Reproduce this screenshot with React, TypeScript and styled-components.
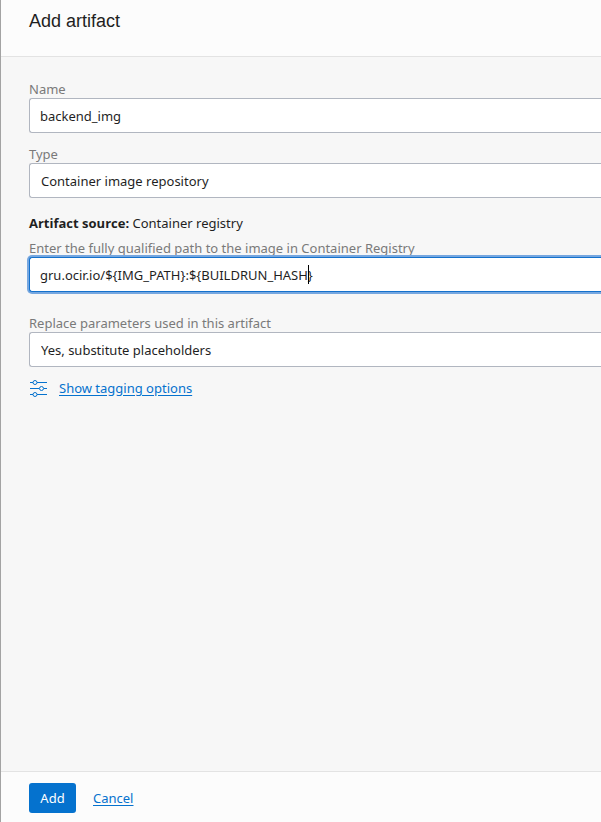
import { useId, useLayoutEffect, useRef, useState } from "react";
import styled, { createGlobalStyle, css } from "styled-components";

const GlobalStyle = createGlobalStyle`
  * { box-sizing: border-box; }
  body { margin: 0; background: #f7f7f7; }
`;

const uiFont = `"Noto Sans", "Open Sans", sans-serif`;

const Drawer = styled.form`
  display: flex;
  flex-direction: column;
  min-height: 100vh;
  border-left: 1px solid #a3a3a3;
  background: #f7f7f7;
  color: #1f1f1f;
  font: 13px/18px ${uiFont};
  overflow: hidden;
`;

const Header = styled.header`
  padding: 9px 28px 23px;
  border-bottom: 1px solid #e3e3e3;
  background: #fcfcfc;
`;

const Title = styled.h1`
  margin: 0;
  font: 400 18px/24px "Liberation Sans", Arial, sans-serif;
`;

const Body = styled.main`
  flex: 1;
  padding: 23px 0 23px 28px;
`;

const Field = styled.div<{ $gap?: number }>`
  display: flex;
  flex-direction: column;
  margin-bottom: ${({ $gap = 12 }) => $gap}px;
`;

const Label = styled.label`
  height: 18px;
  color: #7a7a7a;
  white-space: nowrap;
`;

const control = css`
  display: block;
  width: 100%;
  height: 35px;
  margin: 0;
  border: 1px solid #b1b6c0;
  border-right: 0;
  border-radius: 3px 0 0 3px;
  background: #fff;
  color: #1f1f1f;
  font: 13px/18px ${uiFont};
  outline: none;
`;

const TextInput = styled.input<{ $active?: boolean }>`
  ${control}
  padding: 0 10px;
  ${({ $active }) =>
    $active &&
    css`
      border-color: #1471cc;
      box-shadow: 0 0 0 2px #76a7e0;
      caret-color: transparent;
    `}
`;

const Select = styled.select`
  ${control}
  appearance: none;
  padding: 0 11px;
`;

const Source = styled.p`
  margin: 16px 0 7px;
  line-height: 18px;
`;

const SourceName = styled.strong`
  font-family: "Open Sans", "Noto Sans", sans-serif;
`;

const CaretBox = styled.div`
  position: relative;
`;

const Caret = styled.span`
  position: absolute;
  top: 8px;
  width: 1px;
  height: 19px;
  background: #000;
  pointer-events: none;
`;

const OptionsRow = styled.div`
  display: flex;
  align-items: center;
  gap: 12px;
`;

const Link = styled.a`
  color: #0572ce;
  text-decoration: underline;
  text-underline-offset: 2px;
`;

const Footer = styled.footer`
  display: flex;
  align-items: center;
  gap: 17px;
  padding: 11px 28px 9px;
  border-top: 1px solid #e3e3e3;
  background: #fcfcfc;
`;

const PrimaryButton = styled.button`
  min-width: 47px;
  height: 30px;
  padding: 0 11px;
  border: 0;
  border-radius: 3px;
  background: #0572ce;
  color: #fff;
  font: 13px/18px ${uiFont};
`;

function SlidersIcon() {
  return (
    <svg width="18" height="18" viewBox="0 0 18 18" fill="none" stroke="#0572ce" aria-hidden="true">
      <path d="M1 3.5h3M8 3.5h10M1 9.5h9M15 9.5h3M1 15.5h3M8 15.5h10" />
      <circle cx="6" cy="3.5" r="2" />
      <circle cx="12.5" cy="9.5" r="2" />
      <circle cx="6" cy="15.5" r="2" />
    </svg>
  );
}

function PathInput({ id }: { id: string }) {
  const [value, setValue] = useState("gru.ocir.io/${IMG_PATH}:${BUILDRUN_HASH}");
  const [caret, setCaret] = useState(value.length - 1);
  const [left, setLeft] = useState(0);
  const input = useRef<HTMLInputElement>(null);

  useLayoutEffect(() => {
    const context = document.createElement("canvas").getContext("2d");
    if (!context || !input.current) return;
    context.font = getComputedStyle(input.current).font;
    setLeft(11 + Math.round(context.measureText(value.slice(0, caret)).width));
  }, [value, caret]);

  return (
    <CaretBox>
      <TextInput
        id={id}
        ref={input}
        $active
        spellCheck={false}
        value={value}
        onChange={(event) => setValue(event.target.value)}
        onSelect={(event) => setCaret(event.currentTarget.selectionStart ?? 0)}
      />
      <Caret style={{ left }} />
    </CaretBox>
  );
}

export default function App() {
  const id = useId();
  return (
    <>
      <GlobalStyle />
      <Drawer onSubmit={(event) => event.preventDefault()}>
        <Header>
          <Title>Add artifact</Title>
        </Header>
        <Body>
          <Field>
            <Label htmlFor={`${id}-name`}>Name</Label>
            <TextInput id={`${id}-name`} defaultValue="backend_img" spellCheck={false} />
          </Field>
          <Field>
            <Label htmlFor={`${id}-type`}>Type</Label>
            <Select id={`${id}-type`}>
              <option>Container image repository</option>
            </Select>
          </Field>
          <Source>
            <SourceName>Artifact source:</SourceName> Container registry
          </Source>
          <Field $gap={22}>
            <Label htmlFor={`${id}-path`}>
              Enter the fully qualified path to the image in Container Registry
            </Label>
            <PathInput id={`${id}-path`} />
          </Field>
          <Field>
            <Label htmlFor={`${id}-replace`}>Replace parameters used in this artifact</Label>
            <Select id={`${id}-replace`}>
              <option>Yes, substitute placeholders</option>
            </Select>
          </Field>
          <OptionsRow>
            <SlidersIcon />
            <Link href="#tagging">Show tagging options</Link>
          </OptionsRow>
        </Body>
        <Footer>
          <PrimaryButton type="submit">Add</PrimaryButton>
          <Link href="#cancel">Cancel</Link>
        </Footer>
      </Drawer>
    </>
  );
}
